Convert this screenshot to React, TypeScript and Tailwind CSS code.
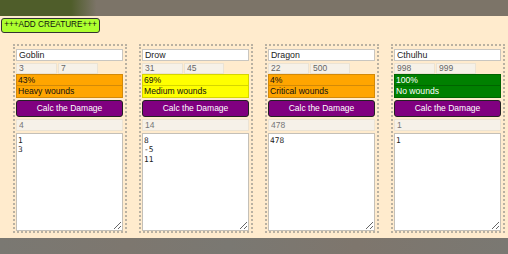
import React from "react";

type Creature = {
  name: string;
  a: string;
  b: string;
  pct: string;
  status: string;
  tone: "orange" | "yellow" | "green";
  last: string;
  log: string;
};

const CREATURES: Creature[] = [
  { name: "Goblin", a: "3", b: "7", pct: "43%", status: "Heavy wounds", tone: "orange", last: "4", log: "1\n3" },
  { name: "Drow", a: "31", b: "45", pct: "69%", status: "Medium wounds", tone: "yellow", last: "14", log: "8\n-5\n11" },
  { name: "Dragon", a: "22", b: "500", pct: "4%", status: "Critical wounds", tone: "orange", last: "478", log: "478" },
  { name: "Cthulhu", a: "998", b: "999", pct: "100%", status: "No wounds", tone: "green", last: "1", log: "1" },
];

const TONES = {
  orange: "bg-[#ffa500] border-[#d38a08] text-[#111]",
  yellow: "bg-[#ffff00] border-[#d6d600] text-[#111]",
  green: "bg-[#008000] border-[#006400] text-white",
};

function CreatureCard({ c }: { c: Creature }) {
  return (
    <div className="flex w-[114px] flex-col border-2 border-dotted border-[#b9b1a2] px-[1.5px] pt-[3px]">
      <input
        defaultValue={c.name}
        className="h-[12px] w-full border border-[#c9c6c0] bg-white px-[2px] text-[8.8px] leading-none text-[#222] outline-none"
      />
      <div className="mt-[1.5px] flex gap-[1px]">
        <input
          readOnly
          defaultValue={c.a}
          className="h-[11px] w-[41px] border border-[#ebe3d4] bg-[#f6f1e8] px-[2px] text-[8.5px] leading-none text-[#666] outline-none"
        />
        <input
          readOnly
          defaultValue={c.b}
          className="h-[11px] w-[40px] border border-[#ebe3d4] bg-[#f6f1e8] px-[2px] text-[8.5px] leading-none text-[#666] outline-none"
        />
      </div>
      <div className={`mt-[0.5px] flex h-[12px] items-center border px-[1px] text-[8.6px] ${TONES[c.tone]}`}>
        {c.pct}
      </div>
      <div className={`flex h-[12px] items-center border border-t-0 px-[1px] text-[8.6px] ${TONES[c.tone]}`}>
        {c.status}
      </div>
      <button
        type="button"
        className="mt-[2px] h-[17px] w-full rounded-[3px] border border-[#222] bg-[#800080] text-[8.5px] text-white"
      >
        Calc the Damage
      </button>
      <input
        readOnly
        defaultValue={c.last}
        className="mt-[2px] h-[12px] w-full border border-[#ebe3d4] bg-[#f6f1e8] px-[2px] text-[8.5px] leading-none text-[#777] outline-none"
      />
      <textarea
        defaultValue={c.log}
        className="mt-[2px] h-[98px] w-full border border-[#c4c0b8] bg-white px-[1px] py-[2px] font-['DejaVu_Sans_Mono',monospace] text-[7.8px] leading-[9.4px] text-[#222] outline-none"
      />
    </div>
  );
}

export default function App() {
  return (
    <div className="h-[254px] w-[508px] overflow-hidden font-['Liberation_Sans',Arial,sans-serif]">
      <div className="h-[16px] bg-[linear-gradient(to_right,#4f5d2a_14%,#7c7468_19%)]" />
      <div className="flex h-[222px] flex-col bg-[#ffebcd]">
        <button
          type="button"
          className="ml-[1px] mt-[2px] h-[15px] w-[99px] rounded-[3px] border border-[#333] bg-[#adff2f] px-0 text-[8.2px] leading-none whitespace-nowrap text-[#111]"
        >
          +++ADD CREATURE+++
        </button>
        <div className="mt-[11px] flex gap-[12px] pl-[12.5px]">
          {CREATURES.map((c) => (
            <CreatureCard key={c.name} c={c} />
          ))}
        </div>
      </div>
      <div className="h-[16px] bg-[linear-gradient(to_right,#7a7872_0%,#7d776f_25%,#7a7872_45%,#7e766d_70%,#7a7872_100%)]" />
    </div>
  );
}
